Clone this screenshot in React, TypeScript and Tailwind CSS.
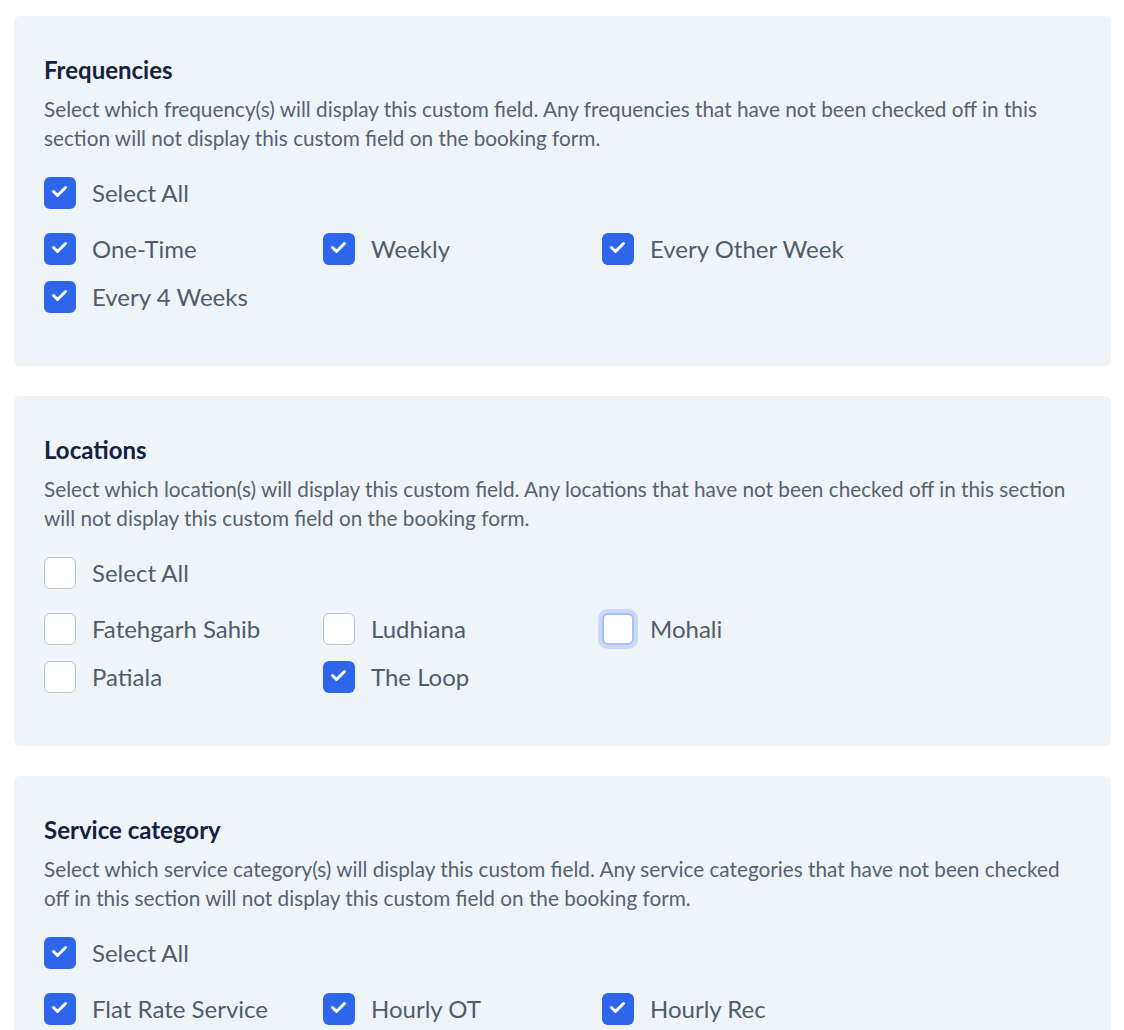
interface Option {
  label: string;
  checked: boolean;
  focused?: boolean;
}

interface Section {
  title: string;
  description: string;
  selectAll: boolean;
  options: Option[];
}

const sections: Section[] = [
  {
    title: "Frequencies",
    description:
      "Select which frequency(s) will display this custom field. Any frequencies that have not been checked off in this section will not display this custom field on the booking form.",
    selectAll: true,
    options: [
      { label: "One-Time", checked: true },
      { label: "Weekly", checked: true },
      { label: "Every Other Week", checked: true },
      { label: "Every 4 Weeks", checked: true },
    ],
  },
  {
    title: "Locations",
    description:
      "Select which location(s) will display this custom field. Any locations that have not been checked off in this section will not display this custom field on the booking form.",
    selectAll: false,
    options: [
      { label: "Fatehgarh Sahib", checked: false },
      { label: "Ludhiana", checked: false },
      { label: "Mohali", checked: false, focused: true },
      { label: "Patiala", checked: false },
      { label: "The Loop", checked: true },
    ],
  },
  {
    title: "Service category",
    description:
      "Select which service category(s) will display this custom field. Any service categories that have not been checked off in this section will not display this custom field on the booking form.",
    selectAll: true,
    options: [
      { label: "Flat Rate Service", checked: true },
      { label: "Hourly OT", checked: true },
      { label: "Hourly Rec", checked: true },
    ],
  },
];

function Checkbox({ checked, focused }: { checked: boolean; focused?: boolean }) {
  if (checked) {
    return (
      <span className="h-8 w-8 shrink-0 rounded-md bg-[#2d66ea]">
        <svg viewBox="0 0 32 32" className="h-8 w-8" fill="none">
          <polyline
            points="9.5 14.5 13.5 18.5 21.5 10.5"
            stroke="white"
            strokeWidth={3}
            strokeLinecap="round"
            strokeLinejoin="round"
          />
        </svg>
      </span>
    );
  }
  return (
    <span
      className={
        focused
          ? "h-8 w-8 shrink-0 rounded-md border-2 border-[#a9c0f8] bg-white ring-4 ring-[#c9d8fb]"
          : "h-8 w-8 shrink-0 rounded-md border border-[#b9c2cc] bg-white"
      }
    />
  );
}

function Row({ option }: { option: Option }) {
  return (
    <label className="flex items-center gap-4">
      <Checkbox checked={option.checked} focused={option.focused} />
      <span className="text-[24px] leading-8 text-[#4f5d6b]">{option.label}</span>
    </label>
  );
}

export default function App() {
  return (
    <div className="min-h-screen bg-white px-[14px] pt-4 font-['Lato',sans-serif]">
      <div className="flex w-[1097px] flex-col gap-[30px]">
        {sections.map((section) => (
          <div key={section.title} className="rounded-md bg-[#eff4f9] px-[30px] pb-[53px] pt-10">
            <h3 className="text-[24px] font-bold leading-7 text-[#13223f]">{section.title}</h3>
            <p className="mt-[11px] text-[20.75px] leading-[29px] text-[#56626f]">{section.description}</p>
            <div className="mt-6">
              <Row option={{ label: "Select All", checked: section.selectAll }} />
            </div>
            <div className="mt-6 grid grid-cols-[279px_279px_279px] gap-y-4">
              {section.options.map((option) => (
                <Row key={option.label} option={option} />
              ))}
            </div>
          </div>
        ))}
      </div>
    </div>
  );
}
